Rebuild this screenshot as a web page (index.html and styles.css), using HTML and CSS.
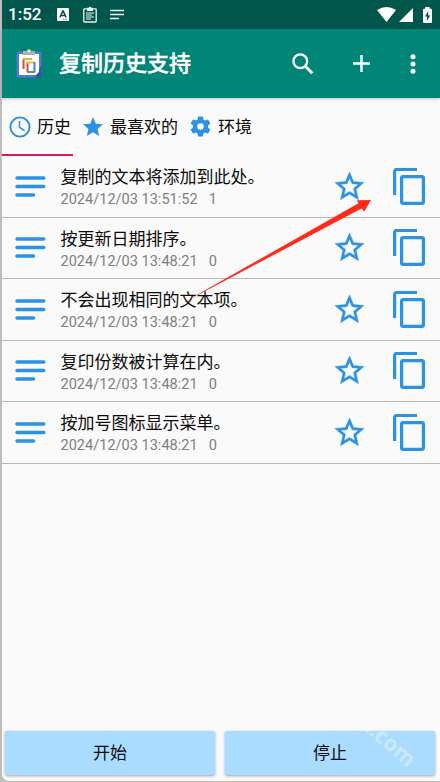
FILE: index.html
```html
<!DOCTYPE html>
<html lang="zh-CN">
<head>
<meta charset="utf-8">
<title>复制历史支持</title>
<link rel="stylesheet" href="styles.css">
</head>
<body>
<svg class="defs" width="0" height="0" aria-hidden="true">
  <symbol id="lines" viewBox="0 0 31 21"><path d="M2 2H28.800M2 10.500H28.800M2 19H18.500" fill="none" stroke="#2b92e4" stroke-width="3.500" stroke-linecap="round"/></symbol>
  <symbol id="star" viewBox="0 0 24 24"><path d="M22 9.240l-7.190-.620L12 2 9.190 8.630 2 9.240l5.460 4.730L5.820 21 12 17.270 18.180 21l-1.630-7.030L22 9.240zM12 15.400l-3.760 2.270 1-4.280-3.320-2.880 4.380-.380L12 6.100l1.710 4.040 4.380.380-3.320 2.880 1 4.280L12 15.400z" fill="#2b92e4" stroke="#2b92e4" stroke-width=".3"/></symbol>
  <symbol id="copy" viewBox="0 0 32 37"><path d="M1.600 27V3.500a2 2 0 0 1 2-2H24" fill="none" stroke="#2b92e4" stroke-width="3.200"/><rect x="8.600" y="8.600" width="21.800" height="26.800" rx="1.600" fill="none" stroke="#2b92e4" stroke-width="3.200"/></symbol>
</svg>
<div class="phone">
  <header class="status">
    <span class="clock">1:52</span>
    <svg class="st-a" width="12" height="13" viewBox="0 0 12 13"><rect width="12" height="13" rx="1.3" fill="#fff"/><path d="M3 9.400 5.800 3h.5L9 9.400M4 7.400h4" fill="none" stroke="#00564a" stroke-width="1.500"/><path d="M6 11.200h4" stroke="#00564a" stroke-width=".8" stroke-dasharray="1 .6"/></svg>
    <svg class="st-clip" width="14" height="17" viewBox="0 0 14 17"><rect x=".8" y="2.800" width="12.400" height="13.200" rx=".8" fill="none" stroke="#e8f4f1" stroke-width="1.300"/><path d="M4 1.700h1.700a1.400 1.400 0 0 1 2.600 0H10v3.200H4z" fill="#e8f4f1"/><path d="M3 7h8M3 9h6M3 11h8M3 13h5" stroke="#e8f4f1"/></svg>
    <svg class="st-lines" width="14" height="11" viewBox="0 0 14 11"><path d="M0 1.500h14M0 5.500h14M0 9.500h9" stroke="#e8f4f1" stroke-width="1.600"/></svg>
    <span class="space"></span>
    <svg width="19" height="15" viewBox="0 0 19 15"><path d="M0 3Q9.500-3 19 3L9.500 15z" fill="#fff"/></svg>
    <svg class="st-cell" width="14" height="14" viewBox="0 0 14 14"><path d="M14 0v14H0z" fill="#fff"/></svg>
    <svg class="st-bat" width="9" height="16" viewBox="0 0 9 16"><path d="M2.300 0h4.400v1.700H8q1 0 1 1V15q0 1-1 1H1q-1 0-1-1V2.700q0-1 1-1h1.300z" fill="#fff"/><path d="M5.200 4 2 9.400h2V14l3.200-5.400h-2z" fill="#00564a"/></svg>
  </header>
  <div class="bar">
    <svg class="logo" width="26" height="29" viewBox="0 0 26 29"><rect x=".5" y="2.500" width="25" height="26" rx="2" fill="#5279d9"/><path d="M19 28.500h4.500a2 2 0 0 0 2-2V16z" fill="#3450a5"/><path d="M3 5h20v18l-3 3H3z" fill="#fff"/><path d="M7 6V2.800Q7 2 8 2h2.500a2.600 2.600 0 0 1 5 0H18q1 0 1 .8V6z" fill="#adb0ad"/><circle cx="13" cy="2.300" r="1.100" fill="#fff"/><path d="M7.500 20V10" stroke="#d94a40" stroke-width="2"/><path d="M6.500 10H16" stroke="#e6b43b" stroke-width="2"/><path d="M11.500 23V13" stroke="#d94a40" stroke-width="2"/><path d="M10.500 13.500H19" stroke="#e6c241" stroke-width="2"/><path d="M18.500 13v10" stroke="#4b7bdc" stroke-width="2"/><path d="M11 23h8" stroke="#42a56b" stroke-width="2"/></svg>
    <h1>复制历史支持</h1>
    <svg class="search" width="22" height="22" viewBox="0 0 22 22"><circle cx="8.300" cy="8.300" r="6.900" fill="none" stroke="#fff" stroke-width="2.300"/><path d="m13.300 13.300 7 7" stroke="#fff" stroke-width="2.900"/></svg>
    <svg class="plus" width="17" height="17" viewBox="0 0 17 17"><path d="M8.500 0v17M0 8.500h17" stroke="#fff" stroke-width="2.500"/></svg>
    <svg class="more" width="6" height="20" viewBox="0 0 6 20"><g fill="#fff"><circle cx="3" cy="2.700" r="2.500"/><circle cx="3" cy="10" r="2.500"/><circle cx="3" cy="17.300" r="2.500"/></g></svg>
  </div>
  <nav class="tabs">
    <div class="tab active"><svg class="i-clock" width="22" height="22" viewBox="0 0 22 22"><g fill="none" stroke="#2b92e4"><circle cx="11" cy="11" r="9.600" stroke-width="1.900"/><path d="M10.500 5v6.300l5 3.200" stroke-width="1.500"/></g></svg><span>历史</span></div>
    <div class="tab fav"><svg width="20" height="19" viewBox="2 2 20 19"><path d="M12 17.270 18.180 21l-1.640-7.030L22 9.240l-7.190-.610L12 2 9.190 8.630 2 9.240l5.460 4.730L5.820 21z" fill="#2b92e4"/></svg><span>最喜欢的</span></div>
    <div class="tab env"><svg width="21" height="21" viewBox="2 2 20 20"><path fill="#2b92e4" d="M19.140 12.940c.04-.3.060-.610.060-.940 0-.320-.020-.640-.070-.940l2.030-1.580a.49.49 0 0 0 .12-.610l-1.920-3.320a.488.488 0 0 0-.59-.220l-2.390.960c-.5-.380-1.030-.700-1.620-.940l-.360-2.540a.484.484 0 0 0-.48-.410h-3.840c-.24 0-.430.170-.470.410l-.360 2.540c-.590.240-1.130.570-1.620.940l-2.390-.960c-.220-.080-.470 0-.590.220L2.740 8.870c-.120.210-.080.470.120.610l2.030 1.580c-.050.300-.090.630-.090.940s.020.640.070.940l-2.030 1.580a.49.49 0 0 0-.12.610l1.920 3.320c.120.220.370.290.590.220l2.390-.960c.500.380 1.030.700 1.620.940l.360 2.540c.050.240.240.410.480.410h3.840c.240 0 .440-.170.470-.410l.360-2.540c.590-.240 1.130-.560 1.620-.940l2.390.960c.220.080.470 0 .590-.220l1.920-3.320c.120-.220.070-.470-.120-.610zM12 15.100a3.100 3.100 0 1 1 0-6.200 3.100 3.100 0 0 1 0 6.200z"/></svg><span>环境</span></div>
  </nav>
  <main class="list">
    <article class="row"><svg class="lines"><use href="#lines"/></svg><div class="text"><div class="title">复制的文本将添加到此处。</div><div class="meta"><span>2024/12/03 13:51:52</span><span>1</span></div></div><svg class="star"><use href="#star"/></svg><svg class="copy"><use href="#copy"/></svg></article>
    <article class="row"><svg class="lines"><use href="#lines"/></svg><div class="text"><div class="title">按更新日期排序。</div><div class="meta"><span>2024/12/03 13:48:21</span><span>0</span></div></div><svg class="star"><use href="#star"/></svg><svg class="copy"><use href="#copy"/></svg></article>
    <article class="row"><svg class="lines"><use href="#lines"/></svg><div class="text"><div class="title">不会出现相同的文本项。</div><div class="meta"><span>2024/12/03 13:48:21</span><span>0</span></div></div><svg class="star"><use href="#star"/></svg><svg class="copy"><use href="#copy"/></svg></article>
    <article class="row"><svg class="lines"><use href="#lines"/></svg><div class="text"><div class="title">复印份数被计算在内。</div><div class="meta"><span>2024/12/03 13:48:21</span><span>0</span></div></div><svg class="star"><use href="#star"/></svg><svg class="copy"><use href="#copy"/></svg></article>
    <article class="row"><svg class="lines"><use href="#lines"/></svg><div class="text"><div class="title">按加号图标显示菜单。</div><div class="meta"><span>2024/12/03 13:48:21</span><span>0</span></div></div><svg class="star"><use href="#star"/></svg><svg class="copy"><use href="#copy"/></svg></article>
  </main>
  <footer class="actions"><button>开始</button><button>停止</button></footer>
</div>
<svg class="arrow" width="192" height="106" viewBox="180 198 192 106"><path d="M180 304.500 358.500 203.200 357 200.200 371 200 364.300 211.500 361.500 208.500z" fill="#ff2a1a"/></svg>
<div class="mark">mfwoz.com</div>
</body>
</html>
```
FILE: styles.css
```css
* { box-sizing: border-box; }
body {
  margin: 0;
  height: 782px;
  padding-left: 2px;
  position: relative;
  overflow: hidden;
  background: #bdbdbd;
  font-family: Roboto, "Noto Sans CJK SC", sans-serif;
  color: #0b0b0b;
}
svg { display: block; flex: none; }
.defs { position: absolute; }
.phone {
  height: 781px;
  display: flex;
  flex-direction: column;
  background: #fafafa;
  border-bottom-left-radius: 7px;
}
.status {
  height: 29px;
  flex: none;
  display: flex;
  align-items: center;
  padding: 0 8px 0 6px;
  background: #00564a;
  color: #fff;
}
.clock { width: 33px; font-size: 17px; font-weight: 500; line-height: 29px; }
.st-a { margin-left: 16px; }
.st-clip { margin-left: 14px; }
.st-lines { margin-left: 13px; }
.space { flex: 1; }
.st-cell { margin-left: 3px; }
.st-bat { margin-left: 10px; }
.bar {
  height: 69px;
  flex: none;
  display: flex;
  align-items: center;
  padding: 0 24px 0 14px;
  background: #008577;
  box-shadow: 0 1px 3px rgba(0, 0, 0, .22);
}
h1 { margin: 0 auto 0 17px; color: #fff; font-size: 22px; line-height: 30px; font-weight: 500; -webkit-text-stroke: .4px #fff; }
.search { margin-right: 39px; }
.plus { margin-right: 40px; }
.tabs { display: flex; height: 58px; flex: none; font-size: 17px; }
.tab { display: flex; align-items: center; gap: 7px; padding-left: 7px; white-space: nowrap; }
.tab span { margin-top: -3px; }
.active { width: 71px; border-bottom: 2px solid #d81b60; padding-top: 2px; gap: 6px; }
.fav { padding-left: 10px; gap: 7px; }
.env { padding-left: 12px; gap: 7px; }
.tab:not(.active) svg { margin-top: -1px; }
.list { flex: 1; }
.row {
  height: 61.500px;
  display: flex;
  align-items: center;
  padding: 0 15px 0 13px;
  border-bottom: 1px solid #b8b8b8;
}
.lines { width: 31px; height: 21px; }
.text { flex: 1; margin-left: 14.500px; padding-top: 3px; }
.title { font-size: 17px; line-height: 24px; white-space: nowrap; }
.meta { display: flex; gap: 11px; color: #808080; font-size: 14.550px; line-height: 21px; }
.star { width: 35px; height: 35px; margin-right: 26px; }
.copy { width: 32px; height: 37px; }
.actions { display: flex; gap: 10px; height: 50px; padding: 0 5px 6px 3px; flex: none; }
button {
  flex: 1;
  border: 0;
  border-radius: 2px;
  padding: 0 0 3px;
  background: #aadcff;
  box-shadow: 0 1px 3px rgba(0, 0, 0, .35);
  color: #0b0b0b;
  font: 17px Roboto, "Noto Sans CJK SC", sans-serif;
}
.arrow { position: absolute; left: 180px; top: 198px; }
.mark {
  position: absolute;
  left: 303px;
  top: 706px;
  transform: rotate(41deg);
  color: rgba(255, 255, 255, .38);
  font: 700 22px/28px "Open Sans", sans-serif;
}
```
